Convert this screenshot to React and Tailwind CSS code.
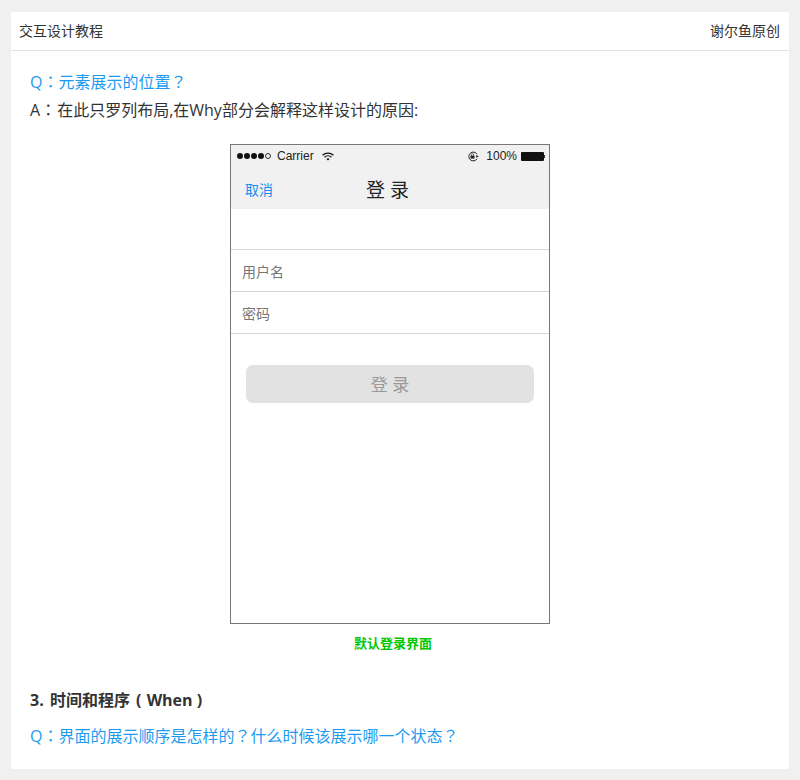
import React from 'react';

const cjk = "font-['Open_Sans','Noto_Sans_CJK_SC',sans-serif]";

// fullwidth punctuation sits centered in the reference, the TC face draws it that way
const Punct = ({ children }) => (
  <span className="font-['Noto_Sans_CJK_TC',sans-serif] leading-none">{children}</span>
);

const StatusBar = () => (
  <div className="flex h-[22px] items-center justify-between pl-[6px] pr-[4px] font-['Liberation_Sans',sans-serif] text-[12px] text-[#222]">
    <div className="flex items-center">
      <span className="h-[6px] w-[6px] rounded-full bg-[#111]" />
      <span className="ml-px h-[6px] w-[6px] rounded-full bg-[#111]" />
      <span className="ml-px h-[6px] w-[6px] rounded-full bg-[#111]" />
      <span className="ml-px h-[6px] w-[6px] rounded-full bg-[#111]" />
      <span className="ml-px h-[6px] w-[6px] rounded-full border border-[#333]" />
      <span className="ml-[6px]">Carrier</span>
      <svg className="ml-[8px]" width="12" height="9" viewBox="0 0 12 9" fill="none" stroke="#111" strokeWidth="1.3">
        <path d="M.6 3.2a8 8 0 0 1 10.8 0" />
        <path d="M2.6 5.2a5 5 0 0 1 6.8 0" />
        <path d="M6 8.6 4.4 6.9a2.3 2.3 0 0 1 3.2 0z" fill="#111" stroke="none" />
      </svg>
    </div>
    <div className="flex items-center">
      <svg width="13" height="11" viewBox="0 0 13 11" fill="none">
        <path d="M10 3.2A4.4 4.4 0 1 0 10 7.8" stroke="#222" strokeWidth="1" />
        <path d="m9.2 4 2.6 1.4-2.6 1.4z" fill="#222" />
        <rect x="3.5" y="4.6" width="4" height="3" fill="#222" />
        <path d="M4.4 4.6V3.8a1.1 1.1 0 0 1 2.2 0v.8" stroke="#222" strokeWidth=".7" />
      </svg>
      <span className="ml-[6px]">100%</span>
      <span className="ml-[4px] h-[9px] w-[23px] rounded-[1px] bg-[#111]" />
      <span className="h-[3px] w-px bg-[#333]" />
    </div>
  </div>
);

const Field = ({ label }) => (
  <div className="flex h-[42px] items-center border-b border-[#d5d5d5] pl-[11px] pt-[2px] text-[14px] text-[#777]">
    {label}
  </div>
);

const Phone = () => (
  <div className={`h-[480px] w-[320px] border border-[#777] bg-white ${cjk}`}>
    <div className="h-[64px] bg-[#f1f1f1]">
      <StatusBar />
      <div className="relative flex h-[42px] items-center justify-center pr-[5px] pt-[3px] text-[19px] text-[#222]">
        <span className="absolute left-[14px] text-[14px] text-[#1c8cf0]">取消</span>
        <span>登 录</span>
      </div>
    </div>
    <div className="h-[41px] border-b border-[#d5d5d5]" />
    <Field label="用户名" />
    <Field label="密码" />
    <div className="mx-[15px] mt-[31px] flex h-[38px] items-center justify-center rounded-[7px] bg-[#e2e2e2] pt-px text-[17px] text-[#999]">
      登 录
    </div>
  </div>
);

export default function App() {
  return (
    <div className={`h-[780px] w-[800px] overflow-hidden bg-[#f0f0f0] pl-[11px] pr-[11px] pt-[12px] pb-[11px] ${cjk}`}>
      <div className="h-[757px] overflow-hidden bg-white">
        <div className="flex h-[39px] items-center justify-between border-b border-[#e3e3e3] pb-[2px] pl-[8px] pr-[9px] text-[14px] text-[#333]">
          <span>交互设计教程</span>
          <span>谢尔鱼原创</span>
        </div>
        <div className="pl-[19px] pr-[18px] pt-[17px] text-[16px] leading-[28px] text-[#333]">
          <p className="text-[#1e9bf0]">Q<Punct>：</Punct>元素展示的位置<Punct>？</Punct></p>
          <p>A<Punct>：</Punct><span className="ml-px">在此只罗列布局,在Why部分会解释这样设计的原因:</span></p>
          <div className="mt-[20px] flex flex-col items-center pr-[21px]">
            <Phone />
            <p className="mt-[7px] pl-[6px] text-[13px] leading-[24px] font-bold text-[#00c800]">默认登录界面</p>
          </div>
          <p className="mt-[31px] font-bold"><span className="mr-[2px]">3.</span> 时间和程序 <span className="ml-[2px] mr-px">(</span> When )</p>
          <p className="mt-[8px] text-[#1e9bf0]">Q<Punct>：</Punct>界面的展示顺序是怎样的<Punct>？</Punct>什么时候该展示哪一个状态<Punct>？</Punct></p>
        </div>
      </div>
    </div>
  );
}
